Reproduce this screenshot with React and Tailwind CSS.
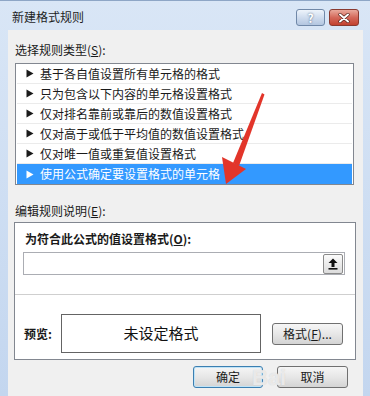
import React from "react";

const font = "font-['Microsoft_YaHei','Noto_Sans_CJK_SC',sans-serif]";

/* ───────── small glyphs ───────── */
const Tri = ({ white }) => (
  <svg width="8" height="9" viewBox="0 0 8 9" className="shrink-0">
    <polygon points="0.5,0.5 7.5,4.5 0.5,8.5" fill={white ? "#ffffff" : "#1a1a1a"} />
  </svg>
);

const Btn = ({ children, className = "", focused }) => (
  <div
    className={`flex items-center justify-center rounded-[3px] border text-[12px] text-[#1a1a1a] bg-gradient-to-b from-[#f6f6f6] via-[#e7e7e7] to-[#d4d4d4] ${
      focused ? "border-[#3c7fb1] shadow-[inset_0_0_0_1px_#bfe3f7]" : "border-[#707070]"
    } ${className}`}
  >
    {children}
  </div>
);

const rules = [
  "基于各自值设置所有单元格的格式",
  "只为包含以下内容的单元格设置格式",
  "仅对排名靠前或靠后的数值设置格式",
  "仅对高于或低于平均值的数值设置格式",
  "仅对唯一值或重复值设置格式",
  "使用公式确定要设置格式的单元格",
];

export default function App() {
  return (
    <div className={`${font} relative w-[370px] h-[396px] overflow-hidden flex flex-col bg-gradient-to-b from-[#d9e6f6] to-[#c3d6ef] border-t border-[#8ea6c6]`}>
      {/* title bar */}
      <div className="h-[29px] flex items-center pl-[12px] pr-[11px] shrink-0">
        <span className="text-[12px] text-[#1e1e1e] pt-[3px]">新建格式规则</span>
        <div className="ml-auto flex gap-[4px] self-start mt-[8px]">
          <div className="w-[29px] h-[17px] rounded-[3px] border border-[#7088a8] bg-gradient-to-b from-[#eef4fb] via-[#cfdcee] to-[#b3c6e0] flex items-center justify-center text-[12px] font-bold text-white leading-none [text-shadow:0_0_2px_#3f5573]">
            ?
          </div>
          <div className="w-[30px] h-[17px] rounded-[3px] border border-[#8a3a30] bg-gradient-to-b from-[#e9a99c] via-[#d4685a] to-[#c2412f] flex items-center justify-center">
            <svg width="12" height="10" viewBox="0 0 12 10">
              <path d="M2 1.5 L10 8.5 M10 1.5 L2 8.5" stroke="#4a1a14" strokeWidth="3.2" strokeLinecap="round" />
              <path d="M2 1.5 L10 8.5 M10 1.5 L2 8.5" stroke="#ffffff" strokeWidth="2" strokeLinecap="round" />
            </svg>
          </div>
        </div>
      </div>

      {/* client area */}
      <div className="flex-1 ml-[8px] mr-[7px] bg-[#f0f0f0] pl-[6px] pr-[7px] pt-[12px] text-[12px] text-[#1a1a1a]">
        <div className="h-[16px] leading-[16px] pl-[1px]">
          选择规则类型(<span className="underline">S</span>):
        </div>

        <div className="mt-[5px] ml-[1px] mr-[2px] border border-[#828790] bg-white px-[1px]">
          {rules.map((r, i) => {
            const sel = i === rules.length - 1;
            return (
              <div
                key={r}
                className={`h-[20px] flex items-center gap-[6px] pl-[9px] ${
                  sel ? "bg-[#3399ff] text-white" : "border-b border-[#ebebeb]"
                }`}
              >
                <Tri white={sel} />
                <span className="leading-none">{r}</span>
              </div>
            );
          })}
        </div>

        <div className="mt-[18px] h-[16px] leading-[16px] pl-[1px]">
          编辑规则说明(<span className="underline">E</span>):
        </div>

        <div className="mt-[3px] h-[138px] border border-[#828790] bg-white flex flex-col">
          <div className="pt-[8px] pl-[10px] pr-[10px] pb-[19px] border-b border-[#cfcfcf]">
            <div className="h-[16px] leading-[16px] font-bold">
              为符合此公式的值设置格式(<span className="underline">O</span>):
            </div>
            <div className="mt-[5px] -ml-[2px] h-[23px] border border-[#abadb3] bg-white flex items-center justify-end pr-[1px]">
              <div className="w-[20px] h-[20px] rounded-[2px] border border-[#8a8a8a] bg-gradient-to-b from-[#fbfbfb] to-[#dcdcdc] flex items-center justify-center">
                <svg width="10" height="12" viewBox="0 0 10 12">
                  <polygon points="5,0.5 9.5,5 6.5,5 6.5,9 3.5,9 3.5,5 0.5,5" fill="#111111" />
                  <rect x="0.5" y="10" width="9" height="1.6" fill="#111111" />
                </svg>
              </div>
            </div>
          </div>

          <div className="flex items-center pl-[9px] mt-[19px]">
            <span className="w-[37px] font-bold">预览:</span>
            <div className="w-[200px] h-[39px] border border-[#646464] bg-white flex items-center justify-center text-[15px] text-[#111111]">
              未设定格式
            </div>
            <Btn className="ml-[11px] w-[71px] h-[22px]">
              格式(<span className="underline">F</span>)...
            </Btn>
          </div>
        </div>

        <div className="mt-[6px] flex justify-end gap-[14px] pr-[8px]">
          <Btn focused className="w-[70px] h-[22px]">确定</Btn>
          <Btn className="w-[71px] h-[22px]">取消</Btn>
        </div>
      </div>

      {/* red annotation arrow */}
      <svg className="absolute left-0 top-0 pointer-events-none" width="370" height="396" viewBox="0 0 370 396">
        <polygon points="262,92 264.5,93.5 239,165 233,162" fill="#e2352a" />
        <polygon points="222,156 246,168 226,183" fill="#e2352a" />
      </svg>

      {/* faint watermark */}
      <div className="absolute left-[252px] top-[360px] text-[22px] font-bold text-white/60 [text-shadow:0_0_1px_#c8c8c8] font-['Liberation_Sans',sans-serif] pointer-events-none">
        Bai
      </div>
    </div>
  );
}
